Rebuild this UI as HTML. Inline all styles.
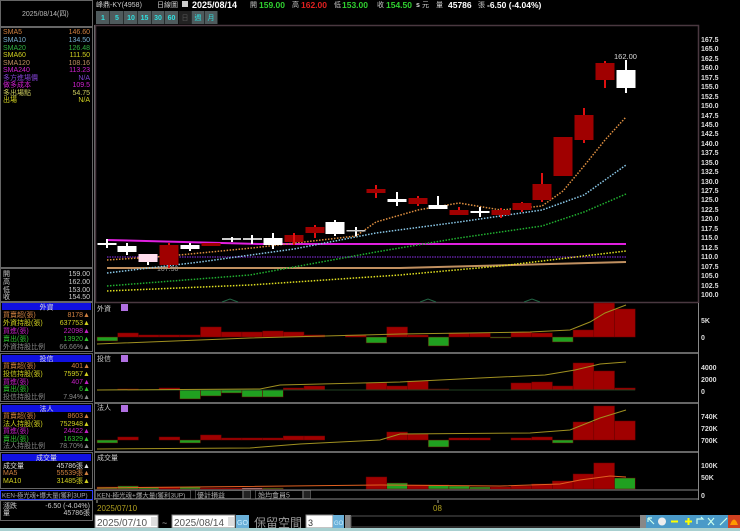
<!DOCTYPE html>
<html><head><meta charset="utf-8"><style>
html,body{margin:0;padding:0;background:#000;width:740px;height:531px;overflow:hidden}
svg{display:block}
text{font-family:"Liberation Sans","Noto Sans CJK TC",sans-serif;font-size:7px}
</style></head><body>
<svg width="740" height="531" viewBox="0 0 740 531" xmlns="http://www.w3.org/2000/svg">
<defs><clipPath id="kc"><rect x="1" y="490" width="91" height="10"/></clipPath></defs>
<rect width="740" height="531" fill="#000"/>
<rect x="0.5" y="0.5" width="92" height="26" fill="none" stroke="#666"/>
<text x="22" y="16" fill="#bbb">2025/08/14(四)</text>
<rect x="0.5" y="27.5" width="92" height="240" fill="none" stroke="#666"/>
<g>
<text x="3" y="34" fill="#d08040">SMA5</text><text x="90" y="34" fill="#d08040" text-anchor="end">146.60</text>
<text x="3" y="42" fill="#7ab0d0">SMA10</text><text x="90" y="42" fill="#7ab0d0" text-anchor="end">134.50</text>
<text x="3" y="50" fill="#30b040">SMA20</text><text x="90" y="50" fill="#30b040" text-anchor="end">126.48</text>
<text x="3" y="57" fill="#d0d020">SMA60</text><text x="90" y="57" fill="#d0d020" text-anchor="end">111.50</text>
<text x="3" y="65" fill="#c09060">SMA120</text><text x="90" y="65" fill="#c09060" text-anchor="end">108.16</text>
<text x="3" y="72" fill="#d020d0">SMA240</text><text x="90" y="72" fill="#d020d0" text-anchor="end">113.23</text>
<text x="3" y="80" fill="#8040d0">多方進場價</text><text x="90" y="80" fill="#8040d0" text-anchor="end">N/A</text>
<text x="3" y="87" fill="#d020d0">做多成本</text><text x="90" y="87" fill="#d020d0" text-anchor="end">109.5</text>
<text x="3" y="95" fill="#d0d060">多出場點</text><text x="90" y="95" fill="#d0d060" text-anchor="end">54.75</text>
<text x="3" y="102" fill="#d0d020">出場</text><text x="90" y="102" fill="#d0d020" text-anchor="end">N/A</text>
</g>
<rect x="0.5" y="268.5" width="92" height="33" fill="none" stroke="#666"/>
<text x="3" y="276" fill="#ccc">開</text><text x="90" y="276" fill="#ccc" text-anchor="end">159.00</text>
<text x="3" y="284" fill="#ccc">高</text><text x="90" y="284" fill="#ccc" text-anchor="end">162.00</text>
<text x="3" y="292" fill="#ccc">低</text><text x="90" y="292" fill="#ccc" text-anchor="end">153.00</text>
<text x="3" y="299" fill="#ccc">收</text><text x="90" y="299" fill="#ccc" text-anchor="end">154.50</text>
<rect x="0.5" y="302.5" width="92" height="49" fill="none" stroke="#666"/>
<rect x="2" y="303" width="89" height="7" fill="#1010e0"/><text x="46.5" y="309.5" fill="#ddd" text-anchor="middle">外資</text>
<text x="3" y="317" fill="#d08040">買賣超(張)</text><text x="90" y="317" fill="#d08040" text-anchor="end">8178▲</text>
<text x="3" y="325" fill="#d0d020">外資持股(張)</text><text x="90" y="325" fill="#d0d020" text-anchor="end">637753▲</text>
<text x="3" y="333" fill="#c020c0">買進(張)</text><text x="90" y="333" fill="#c020c0" text-anchor="end">22098▲</text>
<text x="3" y="341" fill="#30c030">賣出(張)</text><text x="90" y="341" fill="#30c030" text-anchor="end">13920▲</text>
<text x="3" y="349" fill="#888">外資持股比例</text><text x="90" y="349" fill="#888" text-anchor="end">66.66%▲</text>
<rect x="0.5" y="353.5" width="92" height="48" fill="none" stroke="#666"/>
<rect x="2" y="355" width="89" height="7" fill="#1010e0"/><text x="46.5" y="361" fill="#ddd" text-anchor="middle">投信</text>
<text x="3" y="368" fill="#d08040">買賣超(張)</text><text x="90" y="368" fill="#d08040" text-anchor="end">401▲</text>
<text x="3" y="376" fill="#d0d020">投信持股(張)</text><text x="90" y="376" fill="#d0d020" text-anchor="end">75957▲</text>
<text x="3" y="384" fill="#c020c0">買進(張)</text><text x="90" y="384" fill="#c020c0" text-anchor="end">407▲</text>
<text x="3" y="391" fill="#30c030">賣出(張)</text><text x="90" y="391" fill="#30c030" text-anchor="end">6▲</text>
<text x="3" y="399" fill="#888">投信持股比例</text><text x="90" y="399" fill="#888" text-anchor="end">7.94%▲</text>
<rect x="0.5" y="403.5" width="92" height="47" fill="none" stroke="#666"/>
<rect x="2" y="405" width="89" height="7" fill="#1010e0"/><text x="46.5" y="411" fill="#ddd" text-anchor="middle">法人</text>
<text x="3" y="418" fill="#d08040">買賣超(張)</text><text x="90" y="418" fill="#d08040" text-anchor="end">8603▲</text>
<text x="3" y="426" fill="#d0d020">法人持股(張)</text><text x="90" y="426" fill="#d0d020" text-anchor="end">752948▲</text>
<text x="3" y="433" fill="#c020c0">買進(張)</text><text x="90" y="433" fill="#c020c0" text-anchor="end">24422▲</text>
<text x="3" y="441" fill="#30c030">賣出(張)</text><text x="90" y="441" fill="#30c030" text-anchor="end">16329▲</text>
<text x="3" y="448" fill="#888">法人持股比例</text><text x="90" y="448" fill="#888" text-anchor="end">78.70%▲</text>
<rect x="0.5" y="452.5" width="92" height="36" fill="none" stroke="#666"/>
<rect x="2" y="454" width="89" height="7" fill="#1010e0"/><text x="46.5" y="460" fill="#ddd" text-anchor="middle">成交量</text>
<text x="3" y="468" fill="#ddd">成交量</text><text x="90" y="468" fill="#ddd" text-anchor="end">45786張▲</text>
<text x="3" y="475" fill="#d08040">MA5</text><text x="90" y="475" fill="#d08040" text-anchor="end">55539張▲</text>
<text x="3" y="483" fill="#d0d020">MA10</text><text x="90" y="483" fill="#d0d020" text-anchor="end">31485張▲</text>
<rect x="0.5" y="490.5" width="92" height="9" fill="#000" stroke="#3040ff"/>
<text x="2" y="497.5" fill="#aab" clip-path="url(#kc)" style="font-size:6.3px">KEN-極光魂+爆大量(獲利3UP)</text>
<rect x="0.5" y="500.5" width="92" height="20" fill="none" stroke="#666"/>
<text x="3" y="508" fill="#ccc">漲跌</text><text x="90" y="508" fill="#ccc" text-anchor="end">-6.50 (-4.04%)</text>
<text x="3" y="515" fill="#ccc">量</text><text x="90" y="515" fill="#ccc" text-anchor="end">45786張</text>

<text x="96" y="7" fill="#ccc">峰鼎-KY(4958)</text>
<text x="157" y="7" fill="#ccc">日線圖</text>
<rect x="182" y="1" width="6" height="6" fill="#ccc"/>
<text x="192" y="8" fill="#fff" font-weight="bold" style="font-size:9px">2025/08/14</text>
<text x="250" y="7" fill="#ccc">開</text><text x="259" y="8" fill="#30d030" font-weight="bold" style="font-size:8.5px">159.00</text>
<text x="292" y="7" fill="#ccc">高</text><text x="301" y="8" fill="#e02020" font-weight="bold" style="font-size:8.5px">162.00</text>
<text x="334" y="7" fill="#ccc">低</text><text x="342" y="8" fill="#30d030" font-weight="bold" style="font-size:8.5px">153.00</text>
<text x="377" y="7" fill="#ccc">收</text><text x="386" y="8" fill="#30d030" font-weight="bold" style="font-size:8.5px">154.50</text>
<text x="416" y="7" fill="#ddd" font-weight="bold">s</text><text x="422" y="7" fill="#ccc">元</text>
<text x="436" y="7" fill="#ccc">量</text><text x="448" y="8" fill="#fff" font-weight="bold" style="font-size:8.5px">45786</text>
<text x="478" y="7" fill="#ccc">張</text><text x="487" y="8" fill="#fff" font-weight="bold" style="font-size:8.5px">-6.50 (-4.04%)</text>
<g fill="#4e5a5c">
<rect x="96" y="11" width="13.5" height="13"/><rect x="110" y="11" width="13.5" height="13"/><rect x="124" y="11" width="13.5" height="13"/><rect x="138" y="11" width="13" height="13"/><rect x="151.5" y="11" width="13" height="13"/><rect x="165" y="11" width="13" height="13"/><rect x="191.5" y="11" width="13" height="13"/><rect x="205" y="11" width="12.5" height="13"/>
</g>
<rect x="178.5" y="11" width="12.5" height="13" fill="#222"/>
<g fill="#30e0e0" font-weight="bold" text-anchor="middle" style="font-size:7.5px">
<text x="103" y="20">1</text><text x="117" y="20">5</text><text x="131" y="20">10</text><text x="144.5" y="20">15</text><text x="158" y="20">30</text><text x="171.5" y="20">60</text>
</g>
<text x="185" y="20" fill="#555" text-anchor="middle">日</text><text x="198" y="20" fill="#30e0e0" text-anchor="middle">週</text><text x="211" y="20" fill="#30e0e0" text-anchor="middle">月</text>

<rect x="95.5" y="25.5" width="603" height="277" fill="none" stroke="#4a3840" stroke-width="1.5"/>
<line x1="95" y1="353" x2="698" y2="353" stroke="#888" stroke-width="1.5"/>
<line x1="95" y1="403" x2="698" y2="403" stroke="#888" stroke-width="1.5"/>
<line x1="95" y1="452" x2="698" y2="452" stroke="#888" stroke-width="1.5"/>
<line x1="95" y1="490" x2="698" y2="490" stroke="#888" stroke-width="1"/>
<line x1="95" y1="499" x2="698" y2="499" stroke="#888" stroke-width="1"/>
<line x1="94.5" y1="25" x2="94.5" y2="500" stroke="#666"/>
<line x1="698.5" y1="303" x2="698.5" y2="500" stroke="#888"/>

<g fill="#ddd" style="font-size:7.5px" font-weight="bold">
<text x="701" y="42">167.5</text><text x="701" y="51">165.0</text><text x="701" y="61">162.5</text><text x="701" y="70">160.0</text><text x="701" y="80">157.5</text><text x="701" y="89">155.0</text><text x="701" y="99">152.5</text><text x="701" y="108">150.0</text><text x="701" y="118">147.5</text><text x="701" y="127">145.0</text><text x="701" y="136">142.5</text><text x="701" y="146">140.0</text><text x="701" y="155">137.5</text><text x="701" y="165">135.0</text><text x="701" y="174">132.5</text><text x="701" y="184">130.0</text><text x="701" y="193">127.5</text><text x="701" y="202">125.0</text><text x="701" y="212">122.5</text><text x="701" y="221">120.0</text><text x="701" y="231">117.5</text><text x="701" y="240">115.0</text><text x="701" y="250">112.5</text><text x="701" y="259">110.0</text><text x="701" y="269">107.5</text><text x="701" y="278">105.0</text><text x="701" y="288">102.5</text><text x="701" y="297">100.0</text>
<text x="701" y="323">5K</text><text x="701" y="340">0</text>
<text x="701" y="370">4000</text><text x="701" y="382">2000</text><text x="701" y="394">0</text>
<text x="701" y="419">740K</text><text x="701" y="431">720K</text><text x="701" y="443">700K</text>
<text x="701" y="468">100K</text><text x="701" y="480">50K</text><text x="701" y="498">0</text>
</g>

<polyline points="107,240 260,244 626,244" fill="none" stroke="#e020e0" stroke-width="2"/>
<line x1="107" y1="257" x2="626" y2="257" stroke="#6020a0" stroke-width="1.5" stroke-dasharray="1.5,1"/>
<polyline points="107,268 400,268 626,262" fill="none" stroke="#c09060" stroke-width="2"/>
<polyline points="107,291 250,285 400,275 500,266 626,251" fill="none" stroke="#e0e020" stroke-width="1.5" stroke-dasharray="1.5,1.5"/>
<polyline points="107,286 250,275 376,252 459,238 542,226 584,212 626,194" fill="none" stroke="#20b030" stroke-width="1.5" stroke-dasharray="1.5,1.5"/>
<polyline points="107,273 200,262 294,249 376,233 459,222 542,210 584,195 626,165" fill="none" stroke="#8ac8e8" stroke-width="1.5" stroke-dasharray="1.5,1.5"/>
<polyline points="107,260 169,256 252,248 356,236 376,222 418,210 459,203 501,210 542,206 563,191 584,166 605,140 626,117" fill="none" stroke="#e09040" stroke-width="1.5" stroke-dasharray="1.5,1.5"/>
<text x="157" y="271" fill="#999">107.50</text>
<text x="614" y="59" fill="#ddd" style="font-size:7.5px">162.00</text>
<g fill="none" stroke="#264" stroke-width="1"><polyline points="222,302 230,299 238,302"/><polyline points="420,302 428,299 436,302"/><polyline points="524,302 532,299 540,302"/></g>

<g>
<rect x="106" y="239" width="2" height="9" fill="#fff"/><rect x="97.5" y="243" width="19" height="2" fill="#fff"/>
<rect x="126" y="243" width="2" height="12" fill="#fff"/><rect x="117.5" y="246" width="19" height="6" fill="#fff"/>
<rect x="147" y="254" width="2" height="11" fill="#fff"/><rect x="138.5" y="254" width="19" height="8" fill="#fde"/>
<rect x="168" y="243" width="2" height="25" fill="#e01010"/><rect x="159.5" y="245" width="19" height="20" fill="#a00000"/>
<rect x="189" y="243" width="2" height="8" fill="#fff"/><rect x="180.5" y="245" width="19" height="4" fill="#fff"/>
<rect x="201.5" y="243" width="19" height="3" fill="#a00000"/>
<rect x="222" y="238" width="19" height="2" fill="#ccc"/><rect x="231" y="237" width="2" height="5" fill="#fff"/>
<rect x="243" y="238" width="19" height="2" fill="#ccc"/><rect x="251" y="235" width="2" height="9" fill="#fff"/>
<rect x="272" y="233" width="2" height="16" fill="#fff"/><rect x="263.5" y="238" width="19" height="7" fill="#fff"/>
<rect x="284.5" y="235" width="19" height="7" fill="#a00000"/><rect x="293" y="233" width="2" height="12" fill="#e01010"/>
<rect x="314" y="225" width="2" height="13" fill="#e01010"/><rect x="305.5" y="227" width="19" height="6" fill="#a00000"/>
<rect x="334" y="220" width="2" height="16" fill="#fff"/><rect x="325.5" y="222" width="19" height="12" fill="#fff"/>
<rect x="355" y="227" width="2" height="9" fill="#fff"/><rect x="346.5" y="230" width="19" height="1.5" fill="#ccc"/>
<rect x="375" y="185" width="2" height="13" fill="#e01010"/><rect x="366.5" y="189" width="19" height="4" fill="#a00000"/>
<rect x="396" y="192" width="2" height="14" fill="#fff"/><rect x="387.5" y="199" width="19" height="3" fill="#fff"/>
<rect x="417" y="196" width="2" height="10" fill="#e01010"/><rect x="408.5" y="198" width="19" height="6" fill="#a00000"/>
<rect x="437" y="196" width="2" height="13" fill="#fff"/><rect x="428.5" y="205" width="19" height="4" fill="#fff"/>
<rect x="458" y="207" width="2" height="8" fill="#e01010"/><rect x="449.5" y="210" width="19" height="5" fill="#a00000"/>
<rect x="479" y="207" width="2" height="10" fill="#fff"/><rect x="470.5" y="211" width="19" height="2" fill="#fff"/>
<rect x="500" y="208" width="2" height="10" fill="#e01010"/><rect x="491.5" y="210" width="19" height="5" fill="#a00000"/>
<rect x="521" y="202" width="2" height="10" fill="#e01010"/><rect x="512.5" y="203" width="19" height="7" fill="#a00000"/>
<rect x="541" y="173" width="2" height="29" fill="#e01010"/><rect x="532.5" y="184" width="19" height="16" fill="#a00000"/>
<rect x="553.5" y="137" width="19" height="39" fill="#a00000"/>
<rect x="583" y="108" width="2" height="35" fill="#e01010"/><rect x="574.5" y="115" width="19" height="25" fill="#a00000"/>
<rect x="604" y="61" width="2" height="27" fill="#e01010"/><rect x="595.5" y="63" width="19" height="17" fill="#a00000"/>
<rect x="625" y="60" width="2" height="33" fill="#fff"/><rect x="616.5" y="70" width="19" height="18" fill="#fff"/>
</g>

<text x="97" y="311" fill="#ccc">外資</text><rect x="121" y="304" width="7" height="7" fill="#b070e0"/>
<text x="97" y="361" fill="#ccc">投信</text><rect x="121" y="355" width="7" height="7" fill="#b070e0"/>
<text x="97" y="410" fill="#ccc">法人</text><rect x="121" y="405" width="7" height="7" fill="#b070e0"/>
<text x="97" y="460" fill="#ccc">成交量</text>

<g stroke="#600" stroke-width="0.5">
<rect x="97" y="337" width="20.7" height="4" fill="#20a020"/>
<rect x="117.7" y="333" width="20.7" height="4" fill="#a00000"/>
<rect x="138.4" y="335" width="20.7" height="2" fill="#a00000"/>
<rect x="159.1" y="335" width="20.7" height="2" fill="#a00000"/>
<rect x="179.8" y="335" width="20.7" height="2" fill="#a00000"/>
<rect x="200.5" y="327" width="20.7" height="10" fill="#a00000"/>
<rect x="221.2" y="332" width="20.7" height="5" fill="#a00000"/>
<rect x="241.9" y="332" width="20.7" height="5" fill="#a00000"/>
<rect x="262.6" y="331" width="20.7" height="6" fill="#a00000"/>
<rect x="283.3" y="332" width="20.7" height="5" fill="#a00000"/>
<rect x="304" y="335" width="20.7" height="2" fill="#a00000"/>
<rect x="345.4" y="335" width="20.7" height="2" fill="#a00000"/>
<rect x="366.1" y="337" width="20.7" height="6" fill="#20a020"/>
<rect x="386.8" y="327" width="20.7" height="10" fill="#a00000"/>
<rect x="407.5" y="335" width="20.7" height="2" fill="#a00000"/>
<rect x="428.2" y="337" width="20.7" height="9" fill="#20a020"/>
<rect x="448.9" y="333" width="20.7" height="4" fill="#a00000"/>
<rect x="469.6" y="333" width="20.7" height="4" fill="#a00000"/>
<rect x="490.3" y="337" width="20.7" height="1" fill="#20a020"/>
<rect x="511" y="332" width="20.7" height="5" fill="#a00000"/>
<rect x="531.7" y="333" width="20.7" height="4" fill="#a00000"/>
<rect x="552.4" y="337" width="20.7" height="5" fill="#20a020"/>
<rect x="573.1" y="330" width="20.7" height="7" fill="#a00000"/>
<rect x="593.8" y="303" width="20.7" height="34" fill="#a00000"/>
<rect x="614.5" y="309" width="20.7" height="28" fill="#a00000"/>
</g>
<polyline points="97,344 250,338 400,334 530,332 570,330 590,322 605,313 626,305" fill="none" stroke="#a09020" stroke-width="1"/>

<g stroke="#600" stroke-width="0.5">
<rect x="117.7" y="389" width="20.7" height="1" fill="#a00000"/>
<rect x="159.1" y="388" width="20.7" height="2" fill="#a00000"/>
<rect x="179.8" y="390" width="20.7" height="9" fill="#20a020"/>
<rect x="200.5" y="390" width="20.7" height="6" fill="#20a020"/>
<rect x="221.2" y="390" width="20.7" height="3" fill="#20a020"/>
<rect x="241.9" y="390" width="20.7" height="7" fill="#20a020"/>
<rect x="262.6" y="390" width="20.7" height="7" fill="#20a020"/>
<rect x="283.3" y="388" width="20.7" height="2" fill="#a00000"/>
<rect x="304" y="386" width="20.7" height="4" fill="#a00000"/>
<rect x="366.1" y="383" width="20.7" height="7" fill="#a00000"/>
<rect x="386.8" y="386" width="20.7" height="4" fill="#a00000"/>
<rect x="407.5" y="381" width="20.7" height="9" fill="#a00000"/>
<rect x="428.2" y="389" width="20.7" height="1" fill="#a00000"/>
<rect x="511" y="383" width="20.7" height="7" fill="#a00000"/>
<rect x="531.7" y="382" width="20.7" height="8" fill="#a00000"/>
<rect x="552.4" y="386" width="20.7" height="4" fill="#a00000"/>
<rect x="573.1" y="363" width="20.7" height="27" fill="#a00000"/>
<rect x="593.8" y="371" width="20.7" height="19" fill="#a00000"/>
<rect x="614.5" y="388" width="20.7" height="2" fill="#a00000"/>
</g>
<line x1="97" y1="390" x2="635" y2="390" stroke="#204020" stroke-width="1"/>
<polyline points="97,390 260,389 280,385 400,382 480,378 545,375 575,370 600,364 626,362" fill="none" stroke="#a09020" stroke-width="1"/>

<g stroke="#600" stroke-width="0.5">
<rect x="97" y="440" width="20.7" height="3" fill="#20a020"/>
<rect x="117.7" y="437" width="20.7" height="3" fill="#a00000"/>
<rect x="159.1" y="437" width="20.7" height="3" fill="#a00000"/>
<rect x="179.8" y="440" width="20.7" height="3" fill="#20a020"/>
<rect x="200.5" y="435" width="20.7" height="5" fill="#a00000"/>
<rect x="221.2" y="438" width="20.7" height="2" fill="#a00000"/>
<rect x="241.9" y="438" width="20.7" height="2" fill="#a00000"/>
<rect x="262.6" y="438" width="20.7" height="2" fill="#a00000"/>
<rect x="283.3" y="436" width="20.7" height="4" fill="#a00000"/>
<rect x="304" y="436" width="20.7" height="4" fill="#a00000"/>
<rect x="386.8" y="432" width="20.7" height="8" fill="#a00000"/>
<rect x="407.5" y="434" width="20.7" height="6" fill="#a00000"/>
<rect x="428.2" y="440" width="20.7" height="7" fill="#20a020"/>
<rect x="448.9" y="438" width="20.7" height="2" fill="#a00000"/>
<rect x="469.6" y="438" width="20.7" height="2" fill="#a00000"/>
<rect x="511" y="438" width="20.7" height="2" fill="#a00000"/>
<rect x="531.7" y="437" width="20.7" height="3" fill="#a00000"/>
<rect x="552.4" y="440" width="20.7" height="3" fill="#20a020"/>
<rect x="573.1" y="422" width="20.7" height="18" fill="#a00000"/>
<rect x="593.8" y="406" width="20.7" height="34" fill="#a00000"/>
<rect x="614.5" y="421" width="20.7" height="19" fill="#a00000"/>
</g>
<polyline points="97,449 250,448 300,444 380,440 400,434 530,433 570,430 600,418 626,410" fill="none" stroke="#a09020" stroke-width="1"/>

<g stroke="#600" stroke-width="0.5">
<rect x="97" y="487" width="20.7" height="2" fill="#20a020"/>
<rect x="117.7" y="486" width="20.7" height="3" fill="#20a020"/>
<rect x="138.4" y="487" width="20.7" height="2" fill="#20a020"/>
<rect x="159.1" y="487" width="20.7" height="2" fill="#a00000"/>
<rect x="179.8" y="487" width="20.7" height="2" fill="#20a020"/>
<rect x="200.5" y="488" width="20.7" height="1" fill="#a00000"/>
<rect x="221.2" y="488" width="20.7" height="1" fill="#a00000"/>
<rect x="241.9" y="488" width="20.7" height="1" fill="#ddd"/>
<rect x="262.6" y="488" width="20.7" height="1" fill="#20a020"/>
<rect x="366.1" y="477" width="20.7" height="12" fill="#a00000"/>
<rect x="386.8" y="483" width="20.7" height="6" fill="#20a020"/>
<rect x="407.5" y="485" width="20.7" height="4" fill="#a00000"/>
<rect x="428.2" y="485" width="20.7" height="4" fill="#20a020"/>
<rect x="448.9" y="486" width="20.7" height="3" fill="#20a020"/>
<rect x="469.6" y="487" width="20.7" height="2" fill="#20a020"/>
<rect x="490.3" y="487" width="20.7" height="2" fill="#a00000"/>
<rect x="511" y="486" width="20.7" height="3" fill="#a00000"/>
<rect x="531.7" y="484" width="20.7" height="5" fill="#a00000"/>
<rect x="552.4" y="481" width="20.7" height="8" fill="#a00000"/>
<rect x="573.1" y="474" width="20.7" height="15" fill="#a00000"/>
<rect x="593.8" y="463" width="20.7" height="26" fill="#a00000"/>
<rect x="614.5" y="478" width="20.7" height="11" fill="#20a020"/>
</g>
<polyline points="97,488 380,485 500,486 560,484 580,480 610,476 626,477" fill="none" stroke="#e06020" stroke-width="1"/>

<rect x="95.5" y="490.5" width="95" height="8" fill="#000" stroke="#888" stroke-width="0.5"/>
<text x="97" y="497.5" fill="#aaa" style="font-size:6.5px">KEN-極光魂+爆大量(獲利3UP)</text>
<rect x="195.5" y="490.5" width="47" height="8" fill="#000" stroke="#888" stroke-width="0.5"/><text x="197" y="497.5" fill="#aaa">優計損益</text>
<rect x="243.5" y="490.5" width="7" height="8" fill="#222" stroke="#888" stroke-width="0.5"/>
<rect x="255.5" y="490.5" width="47" height="8" fill="#000" stroke="#888" stroke-width="0.5"/><text x="258" y="497.5" fill="#aaa">始均會員5</text>
<rect x="303.5" y="490.5" width="7" height="8" fill="#222" stroke="#888" stroke-width="0.5"/>
<line x1="97" y1="500" x2="97" y2="503" stroke="#aa9"/><text x="97" y="511" fill="#b0a020" style="font-size:8px">2025/07/10</text>
<line x1="438" y1="500" x2="438" y2="503" stroke="#aa9"/><text x="433" y="511" fill="#b0a020" style="font-size:8px">08</text>

<rect x="95" y="515" width="63" height="13" fill="#fff" stroke="#888"/><text x="97" y="526" fill="#555" style="font-size:10px">2025/07/10</text>
<rect x="151" y="517" width="6" height="9" fill="#ddd"/>
<text x="162" y="526" fill="#aaa" style="font-size:9px">~</text>
<rect x="172" y="515" width="63" height="13" fill="#fff" stroke="#888"/><text x="174" y="526" fill="#555" style="font-size:10px">2025/08/14</text>
<rect x="228" y="517" width="6" height="9" fill="#ddd"/>
<rect x="236" y="515" width="13" height="13" fill="#6ab0d8"/><text x="237" y="525" fill="#cef" style="font-size:7px">GO</text>
<text x="254" y="527" fill="#999" style="font-size:12px">保留空間</text>
<rect x="306" y="515" width="27" height="13" fill="#fff" stroke="#888"/><text x="308" y="526" fill="#333" style="font-size:9px">3</text>
<rect x="333" y="515" width="11" height="13" fill="#6ab0d8"/><text x="334" y="525" fill="#cef" style="font-size:6px">GO</text>
<rect x="345" y="515" width="6" height="13" fill="#888"/>
<rect x="351" y="516" width="290" height="11" fill="#000" stroke="#555"/>
<rect x="640" y="515" width="6" height="13" fill="#888"/>
<rect x="646" y="515" width="94" height="13" fill="#4a9ac8"/>
<g fill="none" stroke="#cfe" stroke-width="1.2">
<path d="M648 518 L654 524 M648 518 L652 518 M648 518 L648 522"/>
<circle cx="662" cy="521.5" r="4" fill="#eee" stroke="none"/>
<line x1="671" y1="521.5" x2="678" y2="521.5" stroke="#ff0" stroke-width="2"/>
<path d="M685 521.5 H692 M688.5 518 V525" stroke="#ff0" stroke-width="2"/>
<path d="M697 524 L697 519 L703 519 L701 517"/>
<path d="M708 518 L714 525 M714 518 L708 525"/>
<path d="M720 525 L727 518"/>
</g>
<rect x="728" y="515" width="12" height="13" fill="#d04020"/><path d="M730 525 Q734 514 738 525 Z" fill="#f90"/>
<rect x="0" y="528" width="740" height="3" fill="#a8d0d0"/>
</svg>
</body></html>
